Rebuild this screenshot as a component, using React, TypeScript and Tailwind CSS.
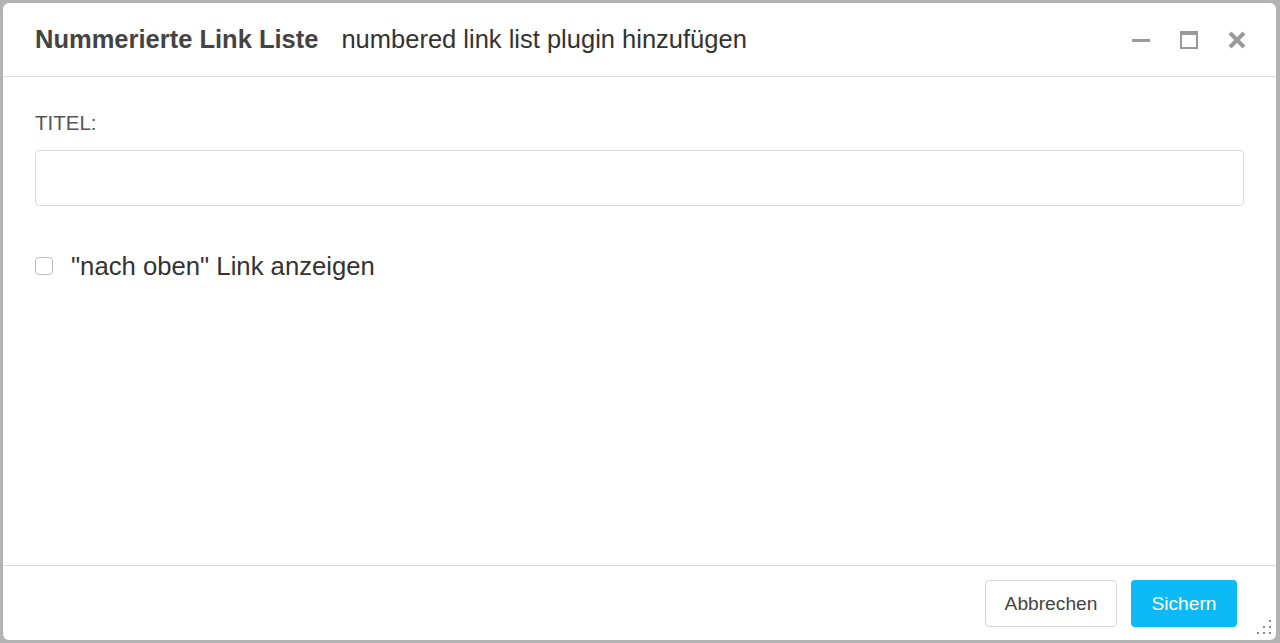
import { useState } from "react";

function MinimizeIcon() {
  return (
    <svg width="18" height="18" viewBox="0 0 18 18" className="text-[#9a9a9a]">
      <rect x="0" y="8" width="18" height="3" fill="currentColor" />
    </svg>
  );
}

function MaximizeIcon() {
  return (
    <svg width="18" height="18" viewBox="0 0 18 18" className="text-[#9a9a9a]">
      <path d="M0 0h18v18H0z M2 4v12h14V4z" fill="currentColor" fillRule="evenodd" />
    </svg>
  );
}

function CloseIcon() {
  return (
    <svg width="18" height="18" viewBox="0 0 18 18" className="text-[#9a9a9a]">
      <path d="M2 2L16 16M16 2L2 16" stroke="currentColor" strokeWidth="4" strokeLinecap="butt" />
    </svg>
  );
}

function ResizeGrip() {
  const dots = [
    [12, 0],
    [6, 6],
    [12, 6],
    [0, 12],
    [6, 12],
    [12, 12],
  ];
  return (
    <svg width="15" height="15" viewBox="0 0 15 15" className="text-[#8a8a8a]">
      {dots.map(([x, y]) => (
        <rect key={`${x}-${y}`} x={x + 1} y={y + 1} width="2" height="2" fill="currentColor" />
      ))}
    </svg>
  );
}

export default function App() {
  const [title, setTitle] = useState("");
  const [showTop, setShowTop] = useState(false);

  return (
    <div
      className="flex h-[643px] w-[1280px] bg-[#b3b3b3] pb-[3px] pl-[3px] pr-[4px] pt-[3px]"
      style={{ fontFamily: '"Liberation Sans", Arial, sans-serif' }}
    >
      <div className="relative flex flex-1 flex-col overflow-hidden rounded-[6px] bg-white">
        <header className="flex h-[74px] shrink-0 items-center border-b border-[#dcdcdc] pl-[32px] pr-[30px]">
          <h2 className="text-[25.5px] font-bold text-[#444]">Nummerierte Link Liste</h2>
          <span className="ml-[23px] text-[25.5px] text-[#333]">numbered link list plugin hinzufügen</span>
          <div className="ml-auto flex items-center gap-[30px]">
            <button className="flex"><MinimizeIcon /></button>
            <button className="flex"><MaximizeIcon /></button>
            <button className="flex"><CloseIcon /></button>
          </div>
        </header>

        <main className="flex-1 px-[32px] pt-[34px]">
          <label className="block text-[20.5px] leading-[24px] text-[#555]">TITEL:</label>
          <input
            value={title}
            onChange={(e) => setTitle(e.target.value)}
            className="mt-[15px] block h-[56px] w-full rounded-[4px] border border-[#d9d9d9] px-3 text-[18px] outline-none"
          />
          <label className="mt-[46px] flex items-center gap-[18px]">
            <input
              type="checkbox"
              checked={showTop}
              onChange={(e) => setShowTop(e.target.checked)}
              className="h-[18px] w-[18px] appearance-none rounded-[4px] border border-[#bdbdbd] bg-white"
            />
            <span className="text-[25.7px] leading-[28px] text-[#333]">"nach oben" Link anzeigen</span>
          </label>
        </main>

        <footer className="flex h-[75px] shrink-0 items-start justify-end gap-[14px] border-t border-[#dcdcdc] pr-[39px] pt-[14px]">
          <button className="h-[47px] w-[132px] rounded-[4px] border border-[#d6d6d6] bg-white pt-[2px] text-[19.2px] text-[#444]">
            Abbrechen
          </button>
          <button className="h-[47px] w-[106px] rounded-[4px] bg-[#0cbaf6] pt-[2px] text-[19.2px] text-white">
            Sichern
          </button>
        </footer>

        <div className="absolute bottom-[6px] right-[5px]">
          <ResizeGrip />
        </div>
      </div>
    </div>
  );
}
